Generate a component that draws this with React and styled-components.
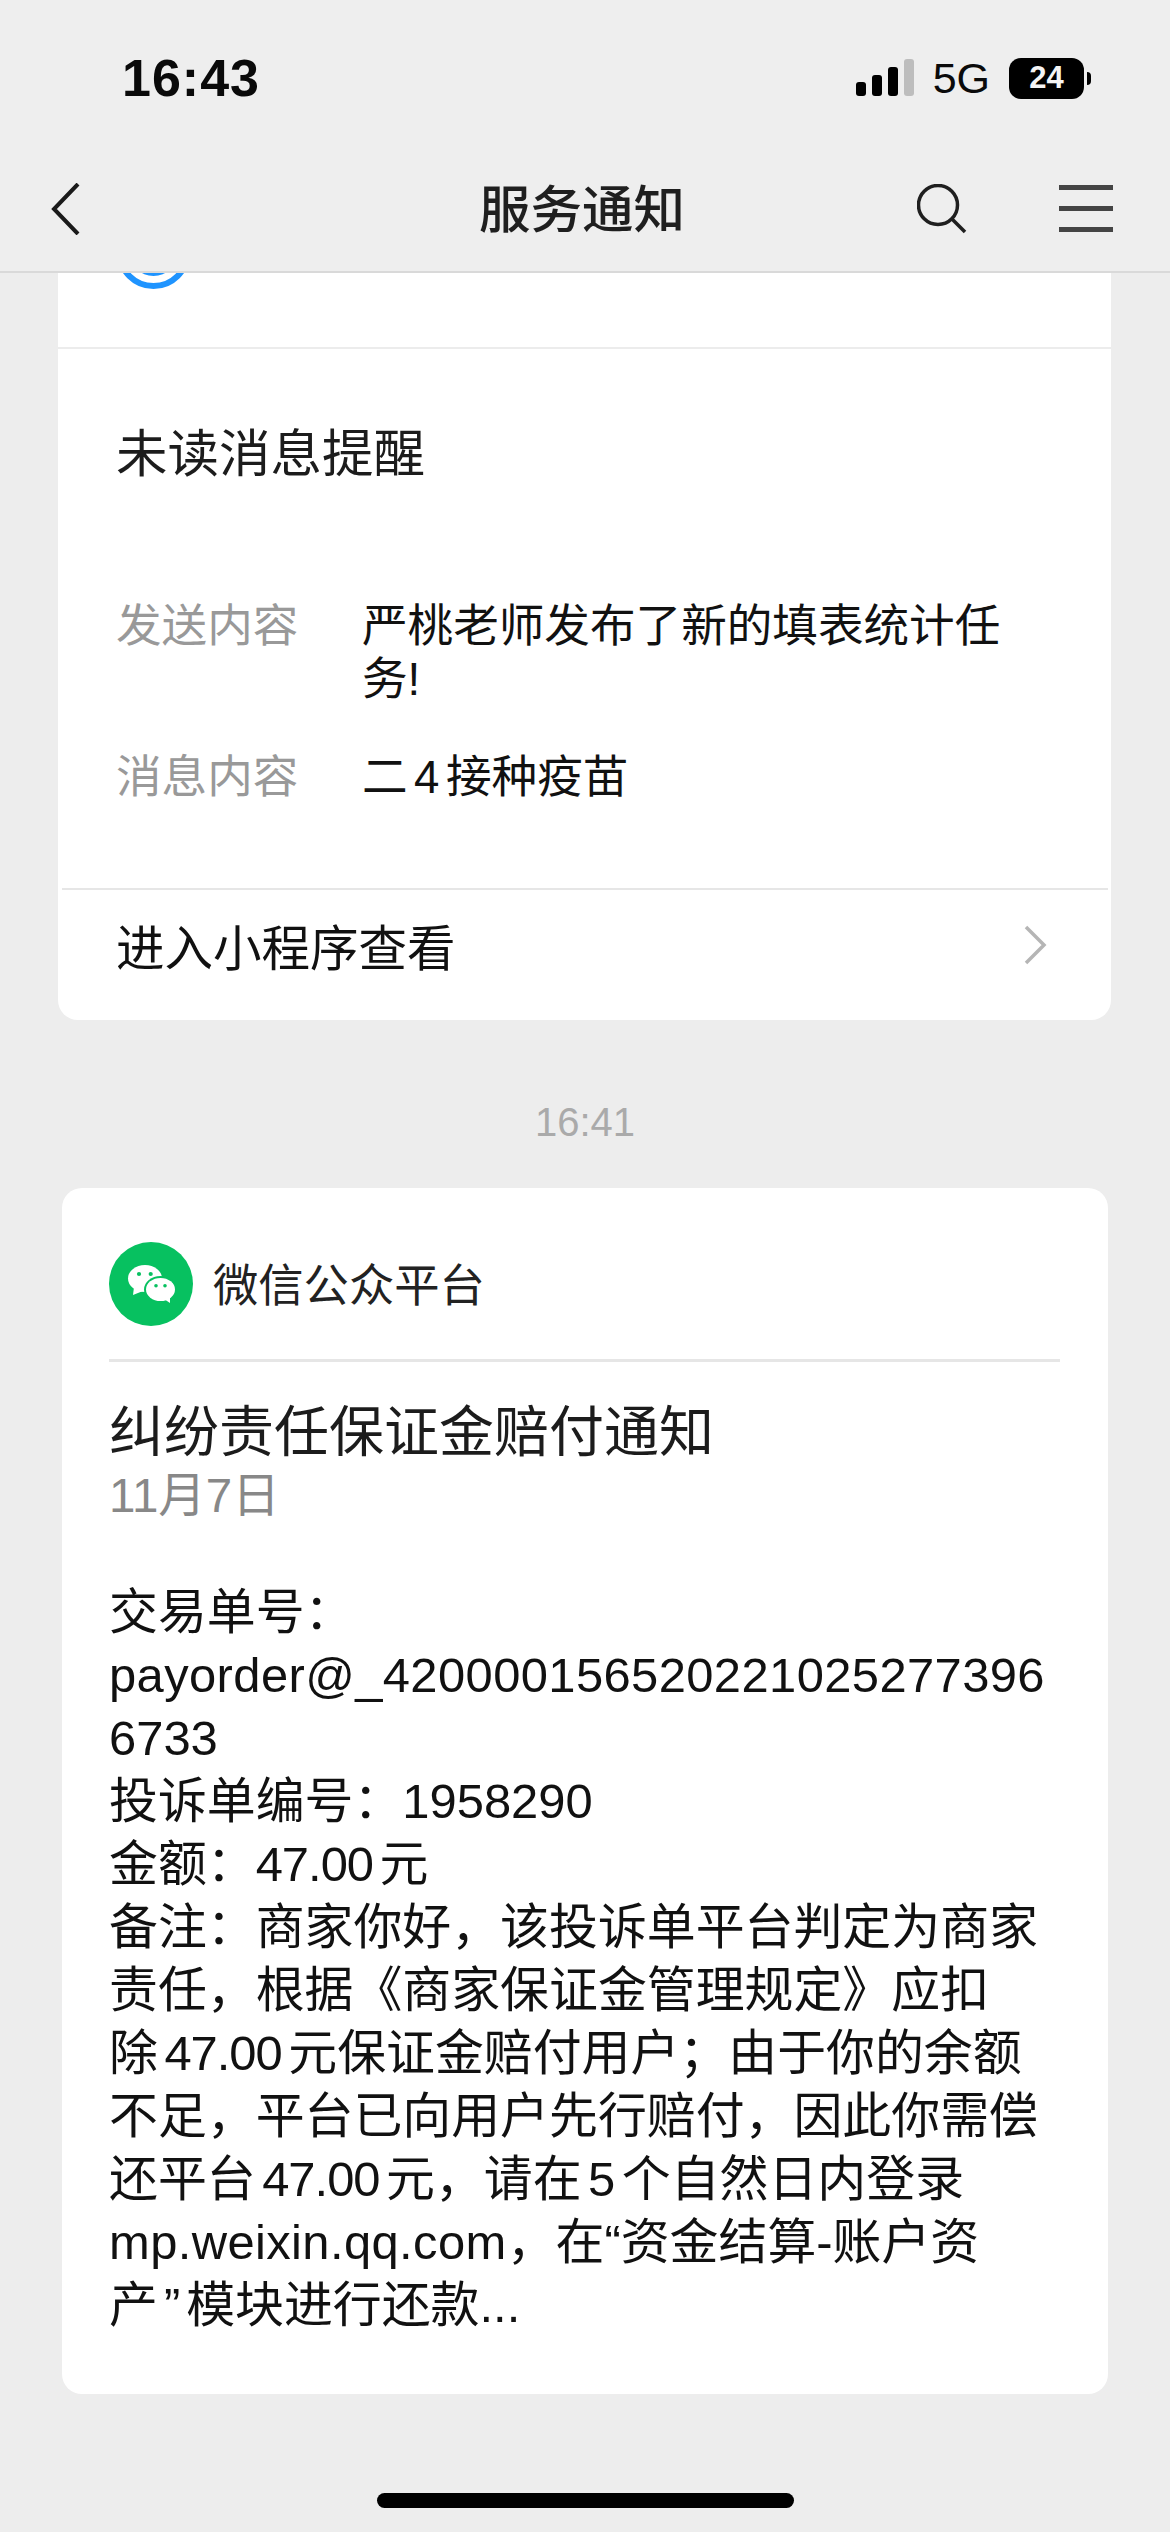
import React from 'react';
import styled, { createGlobalStyle } from 'styled-components';

const GlobalStyle = createGlobalStyle`
    html, body {
        margin: 0;
        padding: 0;
        background: #ededed;
    }
    * {
        box-sizing: border-box;
    }
`
const Page = styled.div`
    width: 1170px;
    height: 2532px;
    overflow: hidden;
    display: flex;
    flex-direction: column;
    background: #ededed;
    color: #1a1a1a;
    font-family: "Liberation Sans", "Noto Sans CJK SC", sans-serif;
`
const Header = styled.header`
    height: 273px;
    flex-shrink: 0;
    background: #eeeeee;
    border-bottom: 2px solid #d9d9d9;
`
const StatusBar = styled.div`
    height: 156px;
    display: flex;
    justify-content: space-between;
    align-items: center;
    padding: 0 86px 0 122px;
`
const Clock = styled.div`
    font-size: 52px;
    font-weight: 700;
    letter-spacing: 1px;
    color: #0a0a0a;
`
const StatusRight = styled.div`
    display: flex;
    align-items: center;
`
const Network = styled.span`
    font-size: 43px;
    margin: 0 19px;
    color: #0a0a0a;
`
const Battery = styled.div`
    position: relative;
    width: 75px;
    height: 41px;
    border-radius: 12px;
    background: #000;
    color: #f5f5f5;
    font-size: 31px;
    font-weight: 700;
    display: flex;
    align-items: center;
    justify-content: center;
    &::after {
        content: '';
        position: absolute;
        right: -7px;
        top: 14px;
        width: 4px;
        height: 13px;
        border-radius: 0 6px 6px 0;
        background: #000;
    }
`
const NavBar = styled.nav`
    height: 105px;
    display: grid;
    grid-template-columns: 1fr auto 1fr;
    align-items: center;
    padding: 0 57px 0 51px;
`
const NavTitle = styled.h1`
    margin: 0;
    padding-top: 3px;
    font-size: 51.5px;
    font-weight: 500;
    line-height: 60px;
    color: #1f1f1f;
`
const NavActions = styled.div`
    display: flex;
    align-items: center;
    justify-content: flex-end;
    gap: 92px;
`
const MenuIcon = styled.div`
    display: flex;
    flex-direction: column;
    gap: 16px;
    width: 54px;
    span {
        height: 5px;
        background: #444;
    }
`
const Icon = styled.svg`
    display: block;
    flex-shrink: 0;
`
const NoticeCard = styled.section`
    margin: 0 59px 0 58px;
    height: 747px;
    flex-shrink: 0;
    background: #fff;
    border-radius: 0 0 20px 20px;
`
const ScrolledHead = styled.div`
    height: 76px;
    padding-left: 64px;
    border-bottom: 2px solid #ececec;
`
const NoticeBody = styled.div`
    height: 539px;
    padding: 74.5px 58px 0;
`
const NoticeTitle = styled.h2`
    margin: 0 0 116px;
    font-size: 51.5px;
    font-weight: 400;
    line-height: 60px;
    color: #1c1c1c;
`
const Field = styled.div`
    display: grid;
    grid-template-columns: 246px 1fr;
    font-size: 45.6px;
    line-height: 53px;
    margin-bottom: 45px;
`
const FieldLabel = styled.div`
    color: #999;
`
const FieldValue = styled.div`
    color: #111;
`
const ActionRow = styled.div`
    height: 119px;
    margin: 0 3px 0 4px;
    padding: 0 61px 8px 54px;
    border-top: 2px solid #e6e6e6;
    display: flex;
    align-items: center;
    justify-content: space-between;
    font-size: 48.5px;
    color: #111;
`
const TimeLabel = styled.div`
    padding: 72px 0 36px;
    font-size: 40px;
    line-height: 60px;
    text-align: center;
    color: #aaa;
`
const MessageCard = styled.section`
    margin: 0 62px;
    height: 1206px;
    flex-shrink: 0;
    padding: 54px 48px 0 47px;
    background: #fff;
    border-radius: 20px;
`
const MessageHead = styled.div`
    display: flex;
    align-items: center;
    gap: 20px;
    padding-bottom: 33px;
    border-bottom: 3px solid #e6e6e6;
    font-size: 45.3px;
    color: #222;
`
const AccountName = styled.span`
    padding-bottom: 5px;
`
const MessageTitle = styled.h2`
    margin: 36px 0 0;
    font-size: 55px;
    font-weight: 400;
    line-height: 68px;
    color: #1c1c1c;
`
const MessageDate = styled.div`
    font-size: 47.5px;
    line-height: 60px;
    color: #888;
`
const MessageBody = styled.div`
    margin-top: 55px;
    font-size: 48.9px;
    line-height: 63px;
    color: #111;
`
const Line = styled.div`
    white-space: nowrap;
`
const Latin = styled.span`
    letter-spacing: 0.4px;
`
const Num = styled.span`
    margin: 0 ${props => props.$flush ? '6.5px 0 0' : '6.5px'};
    letter-spacing: ${props => props.$tight ? '-1px' : '0'};
`
const Quote = styled.span`
    margin: 0 6px;
`
const HomeIndicator = styled.div`
    width: 417px;
    height: 15px;
    margin: 99px 0 0 377px;
    flex-shrink: 0;
    border-radius: 8px;
    background: #000;
`

function SignalIcon() {
    return (
        <Icon width="58" height="38" viewBox="0 0 58 38">
            <rect x="0" y="23" width="10" height="14" rx="3" fill="#000" />
            <rect x="16" y="16" width="10" height="21" rx="3" fill="#000" />
            <rect x="32" y="8" width="10" height="29" rx="3" fill="#000" />
            <rect x="48" y="0" width="10" height="37" rx="3" fill="#bdbdbd" />
        </Icon>
    );
}

function WeChatLogo() {
    return (
        <Icon width="84" height="84" viewBox="0 0 84 84">
            <circle cx="42" cy="42" r="42" fill="#07c160" />
            <ellipse cx="36" cy="36.5" rx="17" ry="13.5" fill="#fff" />
            <path d="M25 45 L24 53 L34 49 Z" fill="#fff" />
            <ellipse cx="51.5" cy="47.5" rx="16.5" ry="13.5" fill="#07c160" />
            <ellipse cx="51.5" cy="47.5" rx="14.5" ry="11.5" fill="#fff" />
            <path d="M55 57 L61 61 L61 54 Z" fill="#fff" />
            <circle cx="30" cy="32" r="2.1" fill="#07c160" />
            <circle cx="41.7" cy="32" r="2.1" fill="#07c160" />
            <circle cx="47" cy="43.7" r="1.8" fill="#07c160" />
            <circle cx="56" cy="43.7" r="1.8" fill="#07c160" />
        </Icon>
    );
}

function App() {
    return (
        <Page lang="zh-CN">
            <GlobalStyle />
            <Header>
                <StatusBar>
                    <Clock>16:43</Clock>
                    <StatusRight>
                        <SignalIcon />
                        <Network>5G</Network>
                        <Battery>24</Battery>
                    </StatusRight>
                </StatusBar>
                <NavBar>
                    <Icon width="30" height="52" viewBox="0 0 30 52">
                        <path d="M27 1 L3 26 L27 51" fill="none" stroke="#1a1a1a" strokeWidth="4" />
                    </Icon>
                    <NavTitle>服务通知</NavTitle>
                    <NavActions>
                        <Icon width="50" height="50" viewBox="0 0 50 50">
                            <circle cx="21" cy="21" r="19.5" fill="none" stroke="#1f1f1f" strokeWidth="3.5" />
                            <path d="M35 35 L48 48" fill="none" stroke="#1f1f1f" strokeWidth="3.5" />
                        </Icon>
                        <MenuIcon>
                            <span />
                            <span />
                            <span />
                        </MenuIcon>
                    </NavActions>
                </NavBar>
            </Header>

            <NoticeCard>
                <ScrolledHead>
                    <Icon width="63" height="18" viewBox="0 0 63 18">
                        <circle cx="31.5" cy="-21" r="34" fill="none" stroke="#1f94ff" strokeWidth="6" />
                        <circle cx="31.5" cy="-21" r="24" fill="#1f94ff" />
                    </Icon>
                </ScrolledHead>
                <NoticeBody>
                    <NoticeTitle>未读消息提醒</NoticeTitle>
                    <Field>
                        <FieldLabel>发送内容</FieldLabel>
                        <FieldValue>严桃老师发布了新的填表统计任<br />务!</FieldValue>
                    </Field>
                    <Field>
                        <FieldLabel>消息内容</FieldLabel>
                        <FieldValue>二<Num>4</Num>接种疫苗</FieldValue>
                    </Field>
                </NoticeBody>
                <ActionRow>
                    <span>进入小程序查看</span>
                    <Icon width="24" height="40" viewBox="0 0 24 40">
                        <path d="M3 2 L21 20 L3 38" fill="none" stroke="#b5b5b5" strokeWidth="3.5" />
                    </Icon>
                </ActionRow>
            </NoticeCard>

            <TimeLabel>16:41</TimeLabel>

            <MessageCard>
                <MessageHead>
                    <WeChatLogo />
                    <AccountName>微信公众平台</AccountName>
                </MessageHead>
                <MessageTitle>纠纷责任保证金赔付通知</MessageTitle>
                <MessageDate>11月7日</MessageDate>
                <MessageBody>
                    <Line>交易单号：</Line>
                    <Line><Latin>payorder@_420000156520221025277396</Latin></Line>
                    <Line>6733</Line>
                    <Line>投诉单编号：1958290</Line>
                    <Line>金额：<Num $flush $tight>47.00</Num>元</Line>
                    <Line>备注：商家你好，该投诉单平台判定为商家</Line>
                    <Line>责任，根据《商家保证金管理规定》应扣</Line>
                    <Line>除<Num $tight>47.00</Num>元保证金赔付用户；由于你的余额</Line>
                    <Line>不足，平台已向用户先行赔付，因此你需偿</Line>
                    <Line>还平台<Num $tight>47.00</Num>元，请在<Num>5</Num>个自然日内登录</Line>
                    <Line><Latin>mp.weixin.qq.com</Latin>，在“资金结算-账户资</Line>
                    <Line>产<Quote>”</Quote>模块进行还款...</Line>
                </MessageBody>
            </MessageCard>

            <HomeIndicator />
        </Page>
    );
}

export default App;
